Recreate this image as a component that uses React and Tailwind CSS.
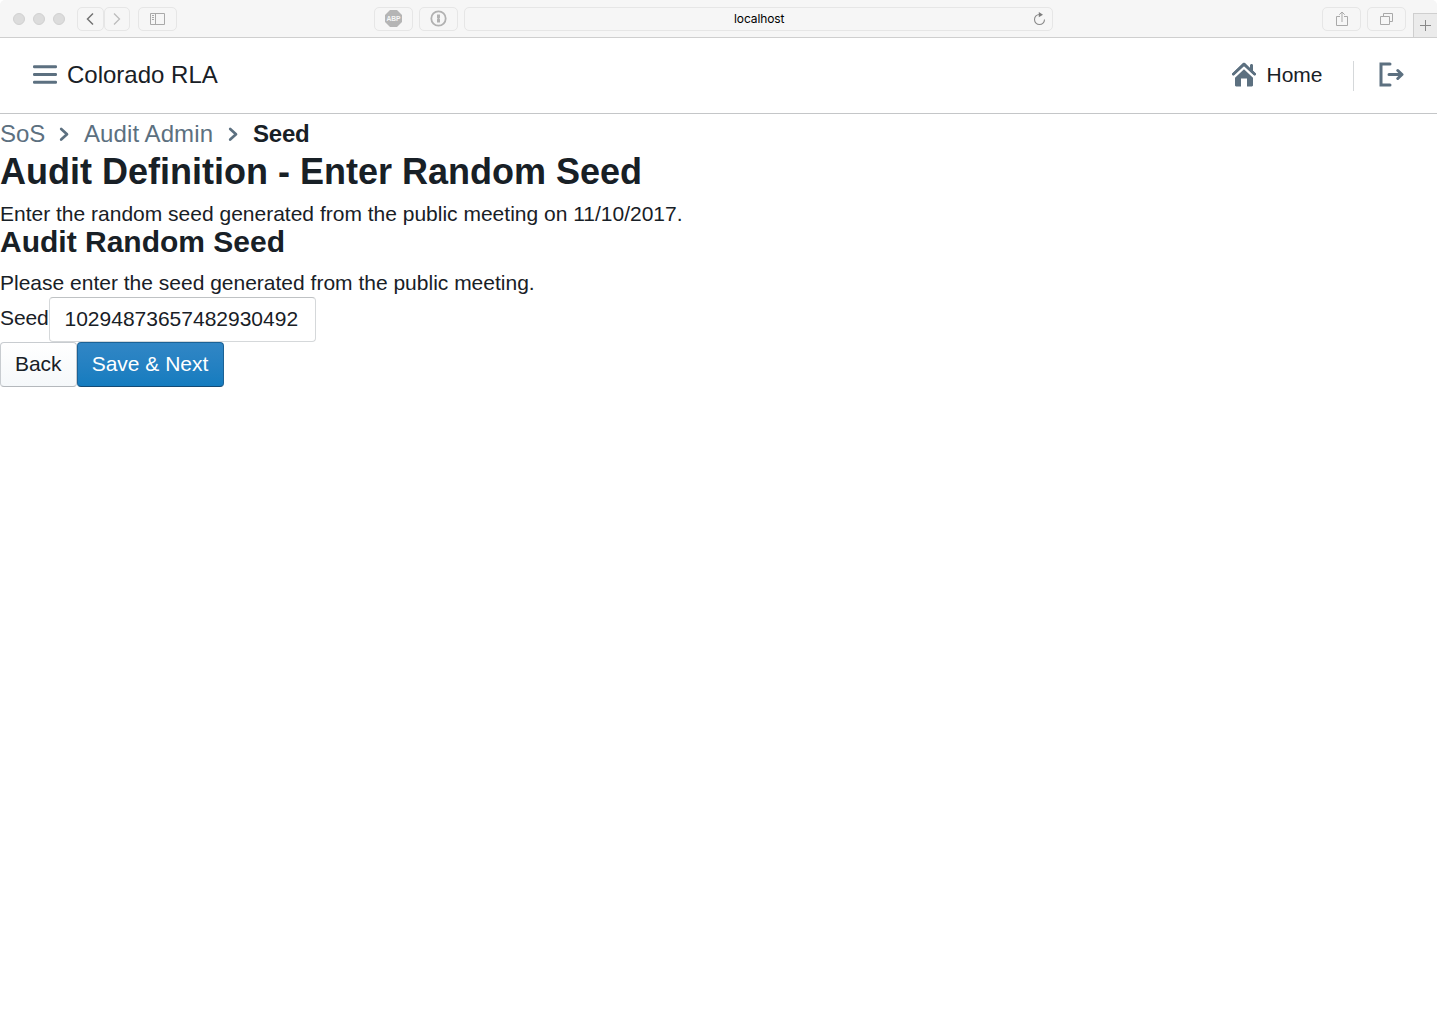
import React from "react";

function ToolButton({ className, children }) {
  return (
    <div className={`flex h-6 shrink-0 items-center justify-center rounded-[5px] border border-[#e6e6e6] bg-[#f6f6f6] ${className}`}>
      {children}
    </div>
  );
}

function BrowserBar() {
  return (
    <div className="flex h-[38px] w-full items-center rounded-t-[5px] border-b border-[#cfcfcf] bg-[#f6f6f6]">
      <div className="ml-[13px] flex gap-2">
        <span className="h-3 w-3 rounded-full border border-[#d1d1d1] bg-[#dcdcdc]" />
        <span className="h-3 w-3 rounded-full border border-[#d1d1d1] bg-[#dcdcdc]" />
        <span className="h-3 w-3 rounded-full border border-[#d1d1d1] bg-[#dcdcdc]" />
      </div>
      <ToolButton className="ml-3 w-[27px]">
        <svg width="8" height="14" viewBox="0 0 8 14" fill="none" stroke="#737373" strokeWidth="1.5" className="-ml-0.5">
          <path d="M7 1.5 1.5 7 7 12.5" />
        </svg>
      </ToolButton>
      <ToolButton className="w-[26px]">
        <svg width="8" height="14" viewBox="0 0 8 14" fill="none" stroke="#bcbcbc" strokeWidth="1.3">
          <path d="M1 1.5 6.5 7 1 12.5" />
        </svg>
      </ToolButton>
      <ToolButton className="ml-2 w-[39px]">
        <svg width="15" height="12" viewBox="0 0 15 12" fill="none" stroke="#a9a9a9">
          <path d="M.5.5h14v11H.5zM5.5.5v11M2 2.5h2M2 4.5h2M2 6.5h2" />
        </svg>
      </ToolButton>
      <ToolButton className="ml-[197px] w-[39px]">
        <svg width="17" height="17" viewBox="0 0 17 17">
          <path d="M5 0h7l5 5v7l-5 5H5l-5-5V5z" fill="#b5b5b5" />
          <text x="8.5" y="11.2" textAnchor="middle" textLength="14" lengthAdjust="spacingAndGlyphs" fill="#f6f6f6" fontFamily="Liberation Sans, sans-serif" fontWeight="bold" fontSize="8">ABP</text>
        </svg>
      </ToolButton>
      <ToolButton className="ml-1.5 w-[39px]">
        <svg width="17" height="17" viewBox="0 0 17 17" fill="none">
          <circle cx="8.5" cy="8.5" r="7.2" stroke="#b1b1b1" strokeWidth="1.8" />
          <path d="M7 4.5h3v3.3l-.7.7.7.7v3.3H7V9.3l.7-.7L7 7.9z" fill="#b1b1b1" />
        </svg>
      </ToolButton>
      <div className="ml-1.5 flex h-6 w-[589px] items-center rounded-[5px] border border-[#e6e6e6] bg-[#f6f6f6]">
        <span className="ml-[269px] mt-px w-[52px] font-['Inter',sans-serif] text-[12px] leading-none tracking-[-0.1px] text-black">localhost</span>
        <svg width="13" height="14" viewBox="0 0 13 14" fill="none" className="ml-[247px]">
          <path d="M6.500 2.500A5 5 0 1 0 11.500 7.500" stroke="#8a8a8a" strokeWidth="1.100" />
          <path d="M5.800 0v5.200l4.200-2.400z" fill="#7d7d7d" />
        </svg>
      </div>
      <ToolButton className="ml-[269px] w-[39px]">
        <svg width="12" height="16" viewBox="0 0 12 16" fill="none" stroke="#a9a9a9">
          <path d="M4 5.500H.5v9h11v-9H8M6 11V1M3.300 3.700 6 1l2.700 2.700" />
        </svg>
      </ToolButton>
      <ToolButton className="ml-1.5 w-[39px]">
        <svg width="13" height="12" viewBox="0 0 13 12" fill="none" stroke="#a9a9a9">
          <path d="M.5 3.500h9v8h-9zM3.500 3V.5h9v8H10" />
        </svg>
      </ToolButton>
      <div className="ml-[7px] flex h-6 w-6 shrink-0 items-center justify-center self-end border-l border-t border-[#cfcfcf] bg-[#ebebeb]">
        <svg width="11" height="11" viewBox="0 0 11 11" stroke="#888888">
          <path d="M0 5.500h11M5.500 0v11" />
        </svg>
      </div>
    </div>
  );
}

function Navbar() {
  return (
    <header className="flex h-[76px] items-center justify-between border-b border-[#c4c6c8] pb-[2px] pl-[33px] pr-8 text-[21px] leading-none">
      <div className="flex items-center">
        <svg width="24" height="21" viewBox="0 0 24 21" fill="#5c7080">
          <rect y="1.2" width="24" height="3" rx="1.2" />
          <rect y="9" width="24" height="3" rx="1.2" />
          <rect y="16.700" width="24" height="3" rx="1.2" />
        </svg>
        <span className="ml-[10px] text-[24px]">Colorado RLA</span>
      </div>
      <div className="flex items-center">
        <svg width="24" height="25" viewBox="0 0 24 25" fill="#5c7080">
          <path d="M12 7.200 3 15.700V23.300c0 .7.500 1.200 1.200 1.200H9v-8h6v8h4.800c.7 0 1.200-.5 1.200-1.200v-7.600z" />
          <path d="M21 8.800V3.500c0-.8-.6-1.400-1.400-1.400S18 2.700 18 3.500v2.400L13 1c-.6-.5-1.500-.5-2 0L.5 11.300c-.6.600-.6 1.300-.1 1.700.5.500 1.300.4 1.700 0L12 3.900l9.900 9.100c.5.400 1.300.4 1.700 0 .5-.5.5-1.200 0-1.700z" />
          <path d="M12 2.300 1.300 12.200M12 2.300l10.700 9.900" fill="none" stroke="#5c7080" strokeWidth="2.600" strokeLinecap="round" />
        </svg>
        <span className="ml-[10.500px] w-[56px]">Home</span>
        <div className="ml-[30.500px] h-[30px] w-px translate-y-px bg-[#d5d8da]" />
        <svg width="25" height="25" viewBox="0 0 25 25" fill="none" stroke="#5c7080" strokeWidth="3" strokeLinecap="round" strokeLinejoin="round" className="ml-[25px] mr-px">
          <path d="M11 2H2v21h9" strokeLinejoin="miter" />
          <path d="M10 12.500H22M18.800 8.500l4.200 4-4.200 4" />
        </svg>
      </div>
    </header>
  );
}

function Chevron({ className }) {
  return (
    <svg width="10" height="15" viewBox="0 0 10 15" fill="none" stroke="#5c7080" strokeWidth="2.7" strokeLinecap="round" strokeLinejoin="round" className={className}>
      <path d="M2.200 2 8 7.300 2.200 12.600" />
    </svg>
  );
}

export default function App() {
  return (
    <div className="h-[1020px] w-full overflow-hidden bg-white font-['Liberation_Sans',Arial,sans-serif] text-[#182026]">
      <BrowserBar />
      <Navbar />
      <main className="text-[21px] whitespace-nowrap">
        <nav className="flex h-10 items-center text-[24px] text-[#5c7080]">
          <span className="w-[45px]">SoS</span>
          <Chevron className="ml-[14px]" />
          <span className="ml-[15px] w-[129px] tracking-[0.09px]">Audit Admin</span>
          <Chevron className="ml-[15px]" />
          <span className="ml-[15px] font-semibold tracking-[-0.2px] text-[#182026]">Seed</span>
        </nav>
        <h1 className="h-[46px] text-[36px] font-bold leading-[36px]">Audit Definition - Enter Random Seed</h1>
        <p className="h-[27px] leading-[27px]">Enter the random seed generated from the public meeting on 11/10/2017.</p>
        <h2 className="h-[42px] text-[30px] font-bold leading-[30px]">Audit Random Seed</h2>
        <p className="h-[28px] leading-[27px]">Please enter the seed generated from the public meeting.</p>
        <div className="flex h-[45px]">
          <label className="w-[49px] leading-[42px] tracking-[-0.1px]">Seed</label>
          <input
            defaultValue="10294873657482930492"
            className="h-[45px] w-[267px] rounded-[4px] border border-[#d5d8da] border-t-[#bfc2c4] bg-white pb-[2px] pl-[14.5px] pr-[10px] text-[21px] outline-none"
          />
        </div>
        <div className="flex h-[45px]">
          <button className="h-[45px] w-[76.5px] rounded-[4px] border border-[#c8ccd0] border-b-[#b4b8bc] bg-linear-to-b from-white to-[#f5f8fa] pb-[2px]">Back</button>
          <button className="h-[45px] w-[147px] rounded-[4px] border border-[#1b6296] border-b-[#134a74] bg-linear-to-b from-[#3186c5] to-[#147cbf] pb-[2px] text-white">Save &amp; Next</button>
        </div>
      </main>
    </div>
  );
}
